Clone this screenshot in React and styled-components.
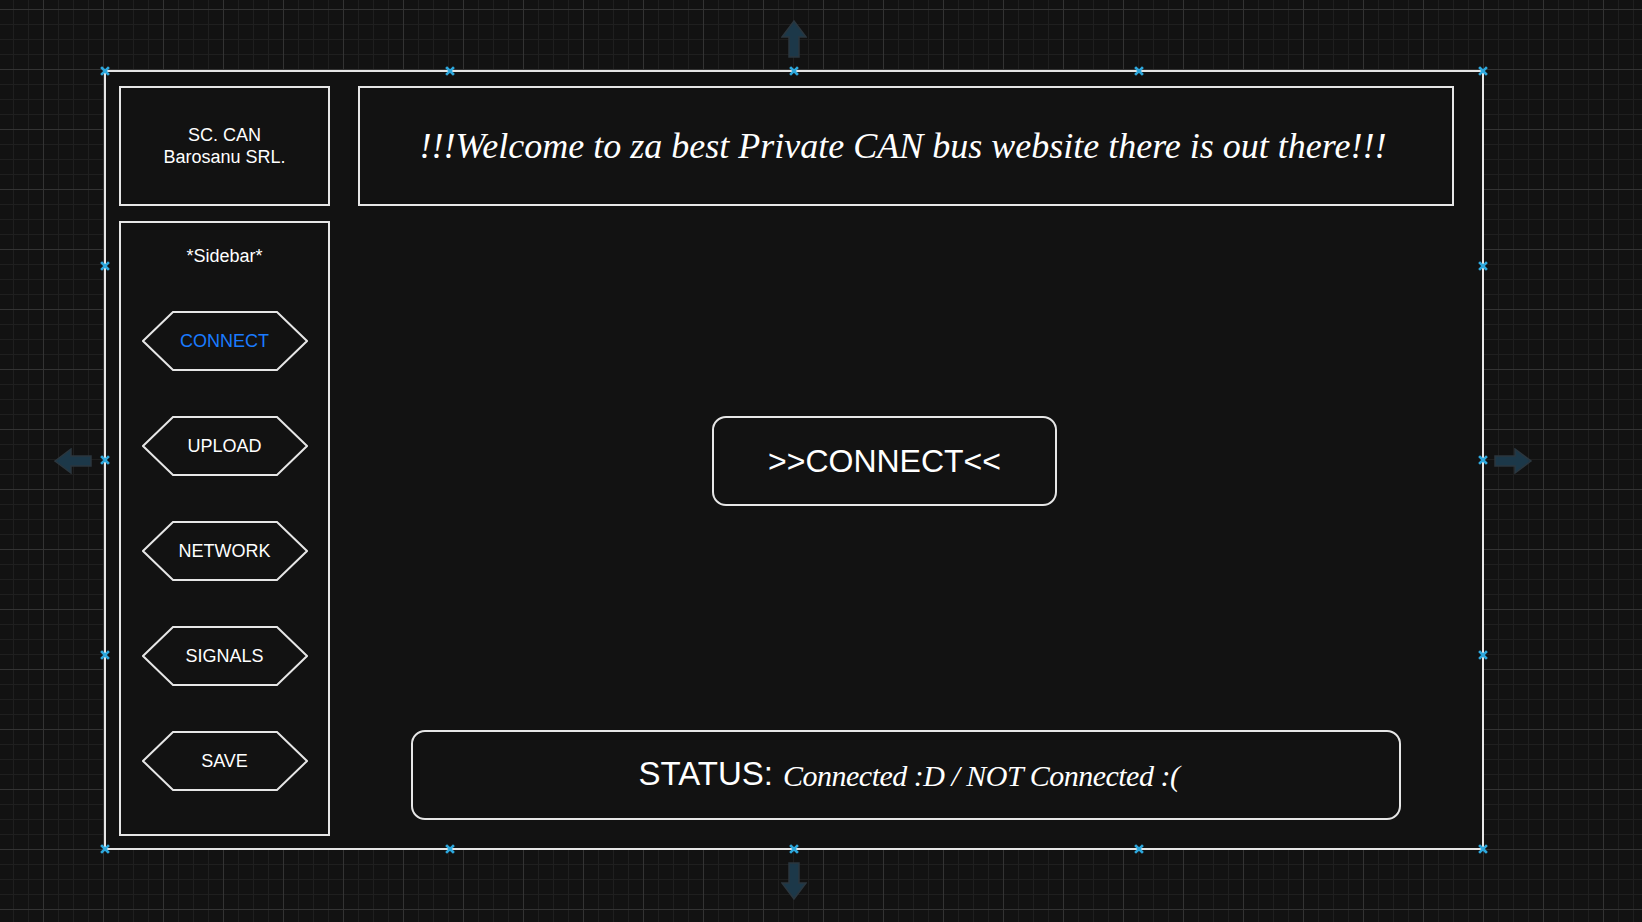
import styled, { createGlobalStyle } from "styled-components";

const GlobalStyle = createGlobalStyle`
  html, body {
    margin: 0;
    padding: 0;
  }
  body {
    width: 1642px;
    height: 922px;
    overflow: hidden;
    font-family: "Liberation Sans", Arial, sans-serif;
    color: #ffffff;
    background-color: #121212;
    background-image:
      linear-gradient(to right, #333333 1px, transparent 1px),
      linear-gradient(to bottom, #333333 1px, transparent 1px),
      linear-gradient(to right, #1f1f1f 1px, transparent 1px),
      linear-gradient(to bottom, #1f1f1f 1px, transparent 1px);
    background-size: 60px 60px, 60px 60px, 15px 15px, 15px 15px;
    background-position: 43px 9px, 43px 9px, 43px 9px, 43px 9px;
  }
`;

const Canvas = styled.div`
  padding: 70px 0 0 104px;
`;

const Frame = styled.div`
  position: relative;
  box-sizing: border-box;
  width: 1380px;
  height: 780px;
  border: 2px solid #e6e6e6;
  background: #121212;
  padding: 14px 28px 12px 13px;
  display: grid;
  grid-template-columns: 211px 1096px;
  grid-template-rows: 120px 615px;
  column-gap: 28px;
  row-gap: 15px;
`;

const Box = styled.div`
  box-sizing: border-box;
  border: 2px solid #e6e6e6;
`;

const LogoBox = styled(Box)`
  display: flex;
  align-items: center;
  justify-content: center;
  text-align: center;
  font-size: 18px;
  line-height: 22px;
`;

const Header = styled(Box)`
  display: flex;
  align-items: center;
  justify-content: center;
  padding-right: 6px;
  font-family: "Liberation Serif", "Times New Roman", serif;
  font-style: italic;
  font-size: 36px;
`;

const Sidebar = styled(Box)`
  display: flex;
  flex-direction: column;
  align-items: center;
  padding-top: 23px;
  gap: 45px;
`;

const SidebarTitle = styled.div`
  font-size: 18px;
  line-height: 20px;
`;

const HexWrap = styled.div`
  position: relative;
  width: 166px;
  height: 60px;
  display: flex;
  align-items: center;
  justify-content: center;
  cursor: pointer;

  svg {
    position: absolute;
    inset: 0;
  }
`;

const HexLabel = styled.span`
  position: relative;
  font-size: 18px;
  color: ${(p) => (p.$active ? "#1a7bff" : "#ffffff")};
`;

const Main = styled.div`
  display: flex;
  flex-direction: column;
  padding-top: 195px;
`;

const ConnectButton = styled.div`
  box-sizing: border-box;
  align-self: flex-start;
  margin-left: 354px;
  width: 345px;
  height: 90px;
  border: 2px solid #e6e6e6;
  border-radius: 14px;
  display: flex;
  align-items: center;
  justify-content: center;
  font-size: 32px;
  cursor: pointer;
`;

const StatusBox = styled.div`
  box-sizing: border-box;
  align-self: center;
  margin-top: auto;
  margin-bottom: 16px;
  width: 990px;
  height: 90px;
  border: 2px solid #e6e6e6;
  border-radius: 14px;
  display: flex;
  align-items: center;
  justify-content: center;
  gap: 10px;
  padding: 0 0 2px 6px;
`;

const StatusLabel = styled.span`
  font-size: 33px;
`;

const StatusValue = styled.span`
  font-family: "Liberation Serif", "Times New Roman", serif;
  font-style: italic;
  font-size: 30px;
  letter-spacing: -0.5px;
  margin-top: 4px;
`;

/* frame border centre line runs from -1px to 1377px (x) and -1px to 777px (y) of the padding box */
const Marker = styled.div`
  position: absolute;
  width: 10px;
  height: 10px;
  left: ${(p) => -1 + (p.$x / 100) * 1378 - 5}px;
  top: ${(p) => -1 + (p.$y / 100) * 778 - 5}px;

  svg {
    display: block;
  }
`;

const Arrow = styled.div`
  position: absolute;
  ${(p) => p.$pos}

  svg {
    display: block;
  }
`;

const HexShape = () => (
  <svg width="166" height="60" viewBox="0 0 166 60">
    <polygon
      points="31,1 135,1 165,30 135,59 31,59 1,30"
      fill="#121212"
      stroke="#e6e6e6"
      strokeWidth="2"
    />
  </svg>
);

const HexButton = ({ label, active }) => (
  <HexWrap>
    <HexShape />
    <HexLabel $active={active}>{label}</HexLabel>
  </HexWrap>
);

const Cross = () => (
  <svg width="10" height="10" viewBox="0 0 10 10">
    <path
      d="M2 2 L8 8 M8 2 L2 8"
      stroke="#2ea8dd"
      strokeWidth="2.6"
      strokeLinecap="square"
    />
  </svg>
);

const arrowPoly = "13,1 25,17 18,17 18,37 8,37 8,17 1,17";

const ArrowShape = ({ rotate }) => (
  <svg
    width="26"
    height="38"
    viewBox="0 0 26 38"
    style={{ transform: `rotate(${rotate}deg)` }}
  >
    <polygon
      points={arrowPoly}
      fill="#1c3849"
      stroke="#2b363e"
      strokeWidth="1.5"
    />
  </svg>
);

const markers = [];
[0, 25, 50, 75, 100].forEach((x) => {
  markers.push([x, 0]);
  markers.push([x, 100]);
});
[25, 50, 75].forEach((y) => {
  markers.push([0, y]);
  markers.push([100, y]);
});

const navItems = ["CONNECT", "UPLOAD", "NETWORK", "SIGNALS", "SAVE"];

export default function App() {
  return (
    <>
      <GlobalStyle />
      <Canvas>
        <Frame>
          <LogoBox>
            SC. CAN
            <br />
            Barosanu SRL.
          </LogoBox>
          <Header>
            !!!Welcome to za best Private CAN bus website there is out there!!!
          </Header>
          <Sidebar>
            <SidebarTitle>*Sidebar*</SidebarTitle>
            {navItems.map((item, i) => (
              <HexButton key={item} label={item} active={i === 0} />
            ))}
          </Sidebar>
          <Main>
            <ConnectButton>&gt;&gt;CONNECT&lt;&lt;</ConnectButton>
            <StatusBox>
              <StatusLabel>STATUS:</StatusLabel>
              <StatusValue>Connected :D / NOT Connected :(</StatusValue>
            </StatusBox>
          </Main>

          {markers.map(([x, y]) => (
            <Marker key={`${x}-${y}`} $x={x} $y={y}>
              <Cross />
            </Marker>
          ))}

          <Arrow $pos="left: 675px; top: -52px;">
            <ArrowShape rotate={0} />
          </Arrow>
          <Arrow $pos="left: 675px; bottom: -52px;">
            <ArrowShape rotate={180} />
          </Arrow>
          <Arrow $pos="left: -46px; top: 370px;">
            <ArrowShape rotate={-90} />
          </Arrow>
          <Arrow $pos="right: -44px; top: 370px;">
            <ArrowShape rotate={90} />
          </Arrow>
        </Frame>
      </Canvas>
    </>
  );
}
